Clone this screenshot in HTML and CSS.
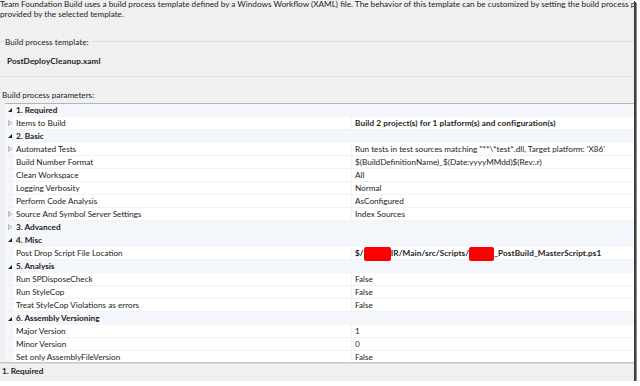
FILE: index.html
```
<!DOCTYPE html>
<html>
  <head>
    <meta charset="UTF-8" />
    <link rel="stylesheet" href="styles.css">
  </head>
  <body>
    <div id="window">
      <div class="intro">
        <div class="line">Team Foundation Build uses a build process template defined by a Windows Workflow (XAML) file. The behavior of this template can be customized by setting the build process parameters</div>
        <div class="line">provided by the selected template.</div>
      </div>
      <div class="group_header"><span>Build process template:</span></div>
      <div class="template_name">PostDeployCleanup.xaml</div>
      <div class="divider"></div>
      <div class="params_label">Build process parameters:</div>
      <div id="grid">
        <div class="row category"><span class="gutter"><svg class="expanded" viewBox="0 0 5 5"><path d="M5 0v5h-5z"/></svg></span><span class="name">1. Required</span></div>
        <div class="row"><span class="gutter"><svg class="collapsed" viewBox="0 0 5 7"><path d="M0.5 0.5l4 3-4 3z"/></svg></span><span class="name">Items to Build</span><span class="value bold">Build 2 project(s) for 1 platform(s) and configuration(s)</span></div>
        <div class="row category"><span class="gutter"><svg class="expanded" viewBox="0 0 5 5"><path d="M5 0v5h-5z"/></svg></span><span class="name">2. Basic</span></div>
        <div class="row"><span class="gutter"><svg class="collapsed" viewBox="0 0 5 7"><path d="M0.5 0.5l4 3-4 3z"/></svg></span><span class="name">Automated Tests</span><span class="value">Run tests in test sources matching "**\*test*.dll, Target platform: 'X86'</span></div>
        <div class="row"><span class="gutter"></span><span class="name">Build Number Format</span><span class="value">$(BuildDefinitionName)_$(Date:yyyyMMdd)$(Rev:.r)</span></div>
        <div class="row"><span class="gutter"></span><span class="name">Clean Workspace</span><span class="value">All</span></div>
        <div class="row"><span class="gutter"></span><span class="name">Logging Verbosity</span><span class="value">Normal</span></div>
        <div class="row"><span class="gutter"></span><span class="name">Perform Code Analysis</span><span class="value">AsConfigured</span></div>
        <div class="row"><span class="gutter"><svg class="collapsed" viewBox="0 0 5 7"><path d="M0.5 0.5l4 3-4 3z"/></svg></span><span class="name">Source And Symbol Server Settings</span><span class="value">Index Sources</span></div>
        <div class="row category"><span class="gutter"><svg class="collapsed" viewBox="0 0 5 7"><path d="M0.5 0.5l4 3-4 3z"/></svg></span><span class="name">3. Advanced</span></div>
        <div class="row category"><span class="gutter"><svg class="expanded" viewBox="0 0 5 5"><path d="M5 0v5h-5z"/></svg></span><span class="name">4. Misc</span></div>
        <div class="row"><span class="gutter"></span><span class="name">Post Drop Script File Location</span><span class="value bold">$/<span class="redact r1"></span>IR/Main/src/Scripts/<span class="redact r2"></span>_PostBuild_MasterScript.ps1</span></div>
        <div class="row category"><span class="gutter"><svg class="expanded" viewBox="0 0 5 5"><path d="M5 0v5h-5z"/></svg></span><span class="name">5. Analysis</span></div>
        <div class="row"><span class="gutter"></span><span class="name">Run SPDisposeCheck</span><span class="value">False</span></div>
        <div class="row"><span class="gutter"></span><span class="name">Run StyleCop</span><span class="value">False</span></div>
        <div class="row"><span class="gutter"></span><span class="name">Treat StyleCop Violations as errors</span><span class="value">False</span></div>
        <div class="row category"><span class="gutter"><svg class="expanded" viewBox="0 0 5 5"><path d="M5 0v5h-5z"/></svg></span><span class="name">6. Assembly Versioning</span></div>
        <div class="row"><span class="gutter"></span><span class="name">Major Version</span><span class="value">1</span></div>
        <div class="row"><span class="gutter"></span><span class="name">Minor Version</span><span class="value">0</span></div>
        <div class="row"><span class="gutter"></span><span class="name">Set only AssemblyFileVersion</span><span class="value">False</span></div>
      </div>
      <div class="status">1. Required</div>
    </div>
  </body>
</html>
```

FILE: styles.css
```
body {
    margin: 0;
    background: white;
    font-family: Lato, "Open Sans", sans-serif;
    font-size: 8.2px;
    color: #222;
}
#window {
    width: 634px;
    height: 381px;
    background: #f0f0f0;
    overflow: hidden;
    box-shadow: 1px 1px 0 #3a3a3a, 2px 2px 0 #454545, 3px 3px 0 #8a8a8a;
    display: flex;
    flex-direction: column;
}
.intro {
    margin-top: -1.5px;
    line-height: 10px;
}
.intro .line {
    white-space: nowrap;
}
.group_header {
    margin-top: 18px;
    display: flex;
    align-items: center;
    line-height: 10px;
}
.group_header::before {
    content: "";
    width: 4px;
    border-top: 1px solid #dcdcdc;
}
.group_header::after {
    content: "";
    flex: 1;
    border-top: 1px solid #dcdcdc;
    margin-left: 2px;
}
.group_header span { padding-left: 1px; }
.template_name {
    margin-top: 9px;
    padding-left: 7px;
    line-height: 10px;
    font-weight: bold;
    letter-spacing: 0.1px;
}
.divider {
    margin-top: 10px;
    border-top: 1px solid #e2e2e2;
}
.params_label {
    margin-top: 13px;
    padding-left: 2px;
    line-height: 10px;
}
#grid {
    margin-top: 3px;
    margin-left: 5px;
    height: 258px;
    border-top: 1px solid #b4b4b4;
    background: white;
    overflow: hidden;
    flex: none;
}
.row {
    display: grid;
    grid-template-columns: 9px 337px 1fr;
    height: 13.05px;
    line-height: 12px;
    box-sizing: border-box;
    border-bottom: 1px solid #f2f2f2;
    white-space: nowrap;
}
.row.category {
    background: #f3f6fb;
    font-weight: bold;
    border-bottom: none;
}
.gutter {
    background: #f3f6fb;
    display: flex;
    align-items: center;
    justify-content: center;
}
.row .name { padding-left: 2px; }
.value {
    border-left: 1px solid #f2f2f2;
    padding-left: 3px;
}
.bold {
    font-weight: bold;
    letter-spacing: 0.1px;
}
.expanded {
    width: 4px;
    height: 4px;
    fill: #222;
}
.collapsed {
    width: 4px;
    height: 6px;
    fill: none;
    stroke: #9a9a9a;
    stroke-width: 1;
}
.redact {
    display: inline-block;
    height: 13.5px;
    vertical-align: top;
    background: #ff0000;
    border-radius: 2px;
}
.r1 { width: 27px; }
.r2 { width: 25px; }
.status {
    border-top: 1px solid #c6c6c6;
    box-shadow: inset 0 1px 0 #dadada;
    padding-top: 3px;
    padding-left: 2px;
    line-height: 10px;
    font-weight: bold;
}
```
